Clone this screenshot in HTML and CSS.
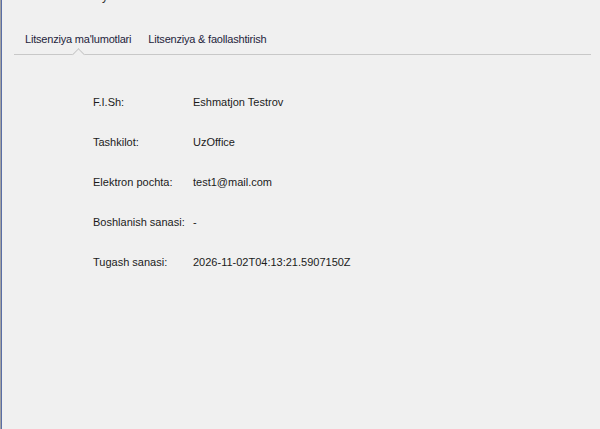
FILE: index.html
```html
<!DOCTYPE html>
<html>
<head>
<meta charset="utf-8">
<link rel="stylesheet" href="styles.css">
</head>
<body>
<div class="window">
  <div class="titlebar">
    <span class="title-frag">y</span>
    <span class="close">×</span>
  </div>
  <div class="tabs">
    <div class="tab active">Litsenziya ma'lumotlari<span class="notch"></span></div>
    <div class="tab">Litsenziya &amp; faollashtirish</div>
  </div>
  <div class="info">
    <div class="row"><span class="label">F.I.Sh:</span><span class="value">Eshmatjon Testrov</span></div>
    <div class="row"><span class="label">Tashkilot:</span><span class="value">UzOffice</span></div>
    <div class="row"><span class="label">Elektron pochta:</span><span class="value">test1@mail.com</span></div>
    <div class="row"><span class="label">Boshlanish sanasi:</span><span class="value">-</span></div>
    <div class="row"><span class="label">Tugash sanasi:</span><span class="value">2026-11-02T04:13:21.5907150Z</span></div>
  </div>
</div>
</body>
</html>
```
FILE: styles.css
```css
html, body {
  margin: 0;
  padding: 0;
  background: #f0f0f0;
}
.window {
  width: 600px;
  height: 429px;
  box-sizing: border-box;
  border-left: 1px solid #a3a3a3;
  box-shadow: inset 1px 0 0 #5a6ea6;
  background: #f0f0f0;
  font-family: "Liberation Sans", Arial, sans-serif;
  font-size: 11px;
  color: #1b1b1b;
  overflow: hidden;
  position: relative;
}
.titlebar {
  height: 0;
  position: relative;
}
.title-frag {
  position: absolute;
  left: 101px;
  top: -11px;
  font-size: 12px;
  color: #333;
}
.close {
  position: absolute;
  left: 571px;
  top: -13px;
  font-size: 16px;
  color: #333;
}
.tabs {
  display: flex;
  margin: 31px 9px 0 13px;
  height: 23px;
  border-bottom: 1px solid #c8c8c8;
  padding-left: 11px;
  gap: 17px;
}
.tab {
  position: relative;
  white-space: nowrap;
  line-height: 16px;
  letter-spacing: -0.2px;
  color: #1e1e3c;
}
.notch {
  position: absolute;
  left: 49px;
  bottom: -5px;
  width: 8px;
  height: 8px;
  background: #f0f0f0;
  border-left: 1px solid #c8c8c8;
  border-top: 1px solid #c8c8c8;
  transform: rotate(45deg);
}
.info {
  padding: 41px 0 0 92px;
  display: flex;
  flex-direction: column;
  gap: 27px;
}
.row {
  display: flex;
  line-height: 13px;
}
.label {
  width: 100px;
  flex: none;
  white-space: nowrap;
}
.value {
  white-space: nowrap;
}
```
